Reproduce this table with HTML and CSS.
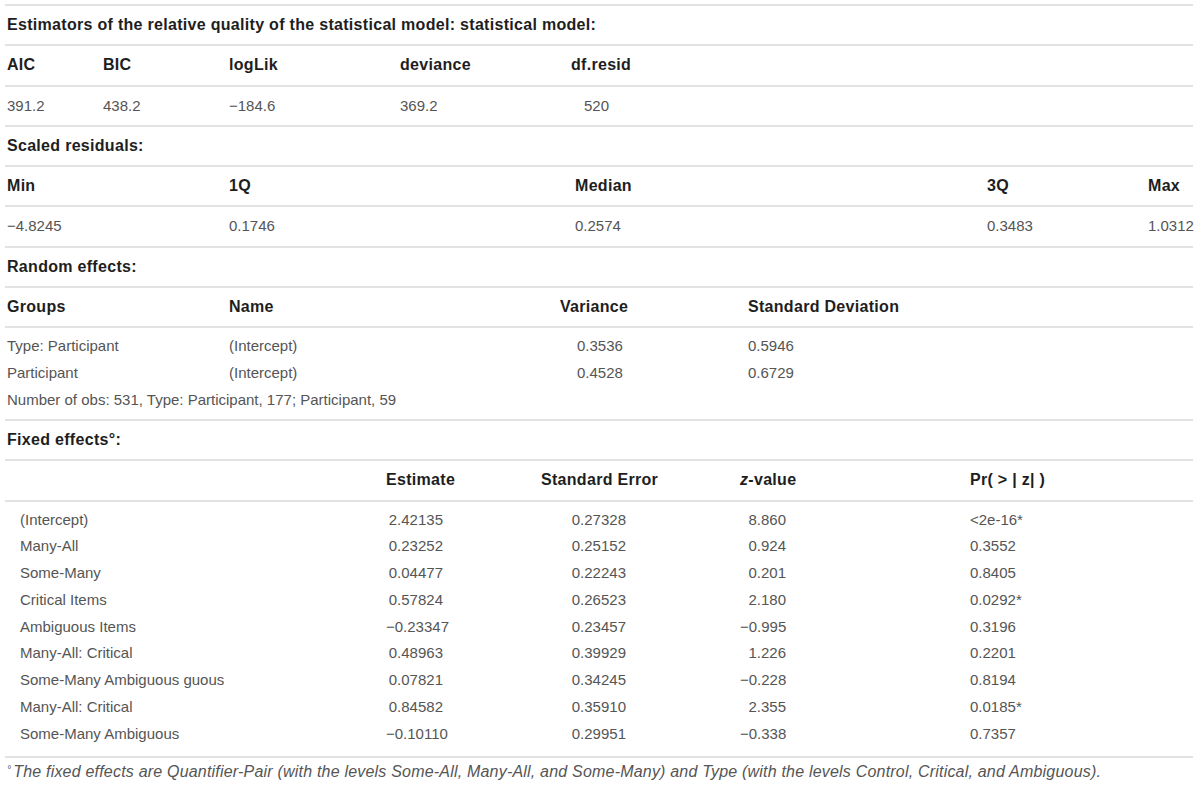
FILE: index.html
```html
<!DOCTYPE html>
<html lang="en">
<head>
<meta charset="UTF-8">
<meta name="viewport" content="width=device-width, initial-scale=1.0">
<title>Model summary</title>
<link rel="stylesheet" href="styles.css">
</head>
<body>

<div class="s_wrap">
    <div class="s_title">Estimators of the relative quality of the statistical model: statistical model:</div>
    <table class="s_table s_fit">
        <colgroup><col class="c1"><col class="c2"><col class="c3"><col class="c4"><col class="c5"><col></colgroup>
        <tr><th>AIC</th><th>BIC</th><th>logLik</th><th>deviance</th><th>df.resid</th><th></th></tr>
        <tr><td>391.2</td><td>438.2</td><td>&minus;184.6</td><td>369.2</td><td class="s_df">520</td><td></td></tr>
    </table>

    <div class="s_title">Scaled residuals:</div>
    <table class="s_table s_resid">
        <colgroup><col class="c1"><col class="c2"><col class="c3"><col class="c4"><col></colgroup>
        <tr><th>Min</th><th>1Q</th><th>Median</th><th>3Q</th><th>Max</th></tr>
        <tr><td>&minus;4.8245</td><td>0.1746</td><td>0.2574</td><td>0.3483</td><td>1.0312</td></tr>
    </table>

    <div class="s_title">Random effects:</div>
    <table class="s_table s_rand">
        <colgroup><col class="c1"><col class="c2"><col class="c3"><col class="c4"><col></colgroup>
        <thead>
            <tr><th>Groups</th><th>Name</th><th>Variance</th><th>Standard Deviation</th><th></th></tr>
        </thead>
        <tbody class="s_body">
            <tr><td>Type: Participant</td><td>(Intercept)</td><td class="s_var">0.3536</td><td>0.5946</td><td></td></tr>
            <tr><td>Participant</td><td>(Intercept)</td><td class="s_var">0.4528</td><td>0.6729</td><td></td></tr>
            <tr><td colspan="5">Number of obs: 531, Type: Participant, 177; Participant, 59</td></tr>
        </tbody>
    </table>

    <div class="s_title">Fixed effects&deg;:</div>
    <table class="s_table s_fixed">
        <colgroup><col class="c1"><col class="c2"><col class="c3"><col class="c4"><col></colgroup>
        <thead>
            <tr><th></th><th>Estimate</th><th>Standard Error</th><th><i>z</i>-value</th><th>Pr( &gt; | z| )</th></tr>
        </thead>
        <tbody class="s_body">
            <tr><td>(Intercept)</td><td>2.42135</td><td>0.27328</td><td>8.860</td><td>&lt;2e-16*</td></tr>
            <tr><td>Many-All</td><td>0.23252</td><td>0.25152</td><td>0.924</td><td>0.3552</td></tr>
            <tr><td>Some-Many</td><td>0.04477</td><td>0.22243</td><td>0.201</td><td>0.8405</td></tr>
            <tr><td>Critical Items</td><td>0.57824</td><td>0.26523</td><td>2.180</td><td>0.0292*</td></tr>
            <tr><td>Ambiguous Items</td><td>&minus;0.23347</td><td>0.23457</td><td>&minus;0.995</td><td>0.3196</td></tr>
            <tr><td>Many-All: Critical</td><td>0.48963</td><td>0.39929</td><td>1.226</td><td>0.2201</td></tr>
            <tr><td>Some-Many Ambiguous guous</td><td>0.07821</td><td>0.34245</td><td>&minus;0.228</td><td>0.8194</td></tr>
            <tr><td>Many-All: Critical</td><td>0.84582</td><td>0.35910</td><td>2.355</td><td>0.0185*</td></tr>
            <tr><td>Some-Many Ambiguous</td><td>&minus;0.10110</td><td>0.29951</td><td>&minus;0.338</td><td>0.7357</td></tr>
        </tbody>
    </table>

    <div class="s_note"><span class="s_deg">&deg;</span>The fixed effects are Quantifier-Pair (with the levels Some-All, Many-All, and Some-Many) and Type (with the levels Control, Critical, and Ambiguous).</div>
</div>

</body>
</html>
```

FILE: styles.css
```css
body {
    margin: 0;
    padding: 0;
    font-family: "Liberation Sans", Arial, sans-serif;
    font-size: 15px;
    color: #555;
    background: #fff;
}

.s_wrap {
    margin: 4px 7px 0 5px;
}

.s_title {
    border-top: 2px solid #e2e2e2;
    line-height: 38.25px;
    padding-left: 2px;
    font-size: 16px;
    letter-spacing: 0.3px;
    font-weight: bold;
    color: #1e1e1e;
}

.s_table {
    width: 100%;
    table-layout: fixed;
    border-collapse: separate;
    border-spacing: 0;
}

.s_table th,
.s_table td {
    padding: 0 0 0 2px;
    text-align: left;
    white-space: nowrap;
    border-top: 2px solid #e2e2e2;
    line-height: 38.25px;
}

.s_table th {
    font-size: 16px;
    letter-spacing: 0.3px;
    font-weight: bold;
    color: #1e1e1e;
}

/* compact rows under a header */
.s_body td {
    border-top: 0;
    line-height: 26.75px;
}

.s_body tr:first-child td {
    border-top: 2px solid #e2e2e2;
    padding-top: 5px;
}

.s_rand .s_body tr:last-child td {
    padding-bottom: 5.75px;
}

.s_fixed .s_body tr:last-child td {
    padding-bottom: 8.5px;
}

/* column widths */
.s_fit .c1 { width: 96px; }
.s_fit .c2 { width: 126px; }
.s_fit .c3 { width: 171px; }
.s_fit .c4 { width: 171px; }
.s_fit .c5 { width: 120px; }
.s_fit .s_df { padding-left: 15px; }

.s_resid .c1 { width: 222px; }
.s_resid .c2 { width: 346px; }
.s_resid .c3 { width: 412px; }
.s_resid .c4 { width: 161px; }

.s_rand .c1 { width: 222px; }
.s_rand .c2 { width: 331px; }
.s_rand .c3 { width: 188px; }
.s_rand .c4 { width: 250px; }
.s_rand .s_var { padding-left: 19px; }

.s_fixed .c1 { width: 379px; }
.s_fixed .c2 { width: 155px; }
.s_fixed .c3 { width: 199px; }
.s_fixed .c4 { width: 230px; }

.s_fixed td:nth-child(1) { padding-left: 15px; }
.s_fixed td:nth-child(2) { text-align: right; padding-right: 96px; }
.s_fixed td:nth-child(3) { text-align: right; padding-right: 112px; }
.s_fixed td:nth-child(4) { text-align: right; padding-right: 182px; }

.s_note {
    border-top: 2px solid #e2e2e2;
    line-height: 24px;
    font-style: italic;
    font-size: 16px;
    letter-spacing: 0.2px;
    padding-left: 2px;
}

.s_deg {
    font-size: 10px;
    vertical-align: 4px;
    margin-right: 2px;
}
```
